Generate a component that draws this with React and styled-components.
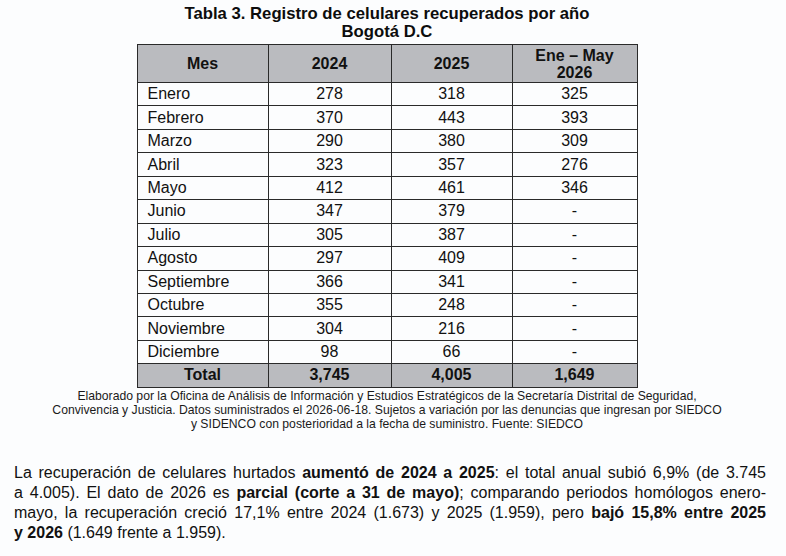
import React from 'react';
import styled, { createGlobalStyle } from 'styled-components';

const GlobalStyle = createGlobalStyle`
  html, body {
    margin: 0;
    padding: 0;
    background: #fcfdfe;
  }
  body {
    font-family: "Liberation Sans", Arial, sans-serif;
    color: #111;
  }
`;

const rows = [
  ['Enero', '278', '318', '325'],
  ['Febrero', '370', '443', '393'],
  ['Marzo', '290', '380', '309'],
  ['Abril', '323', '357', '276'],
  ['Mayo', '412', '461', '346'],
  ['Junio', '347', '379', '-'],
  ['Julio', '305', '387', '-'],
  ['Agosto', '297', '409', '-'],
  ['Septiembre', '366', '341', '-'],
  ['Octubre', '355', '248', '-'],
  ['Noviembre', '304', '216', '-'],
  ['Diciembre', '98', '66', '-'],
];

const App = () => {
  return (
    <Page>
      <GlobalStyle />
      <Figure>
        <Title>
          Tabla 3. Registro de celulares recuperados por año
          <br />
          Bogotá D.C
        </Title>
        <Table>
          <colgroup>
            <col style={{ width: 131 }} />
            <col style={{ width: 123 }} />
            <col style={{ width: 121 }} />
            <col style={{ width: 125 }} />
          </colgroup>
          <thead>
            <tr>
              <HeadCell>Mes</HeadCell>
              <HeadCell>2024</HeadCell>
              <HeadCell>2025</HeadCell>
              <HeadCell>
                Ene – May
                <br />
                2026
              </HeadCell>
            </tr>
          </thead>
          <tbody>
            {rows.map((r) => (
              <Row key={r[0]}>
                <MonthCell>{r[0]}</MonthCell>
                <NumCell>{r[1]}</NumCell>
                <NumCell>{r[2]}</NumCell>
                <NumCell>{r[3]}</NumCell>
              </Row>
            ))}
            <Row>
              <TotalCell>Total</TotalCell>
              <TotalCell>3,745</TotalCell>
              <TotalCell>4,005</TotalCell>
              <TotalCell>1,649</TotalCell>
            </Row>
          </tbody>
        </Table>
        <Caption>
          Elaborado por la Oficina de Análisis de Información y Estudios Estratégicos de la Secretaría Distrital de Seguridad,
          <br />
          Convivencia y Justicia. Datos suministrados el 2026-06-18. Sujetos a variación por las denuncias que ingresan por SIEDCO
          <br />
          y SIDENCO con posterioridad a la fecha de suministro. Fuente: SIEDCO
        </Caption>
      </Figure>
      <Paragraph>
        <Line>
          La recuperación de celulares hurtados <b>aumentó de 2024 a 2025</b>: el total anual subió 6,9% (de 3.745
        </Line>
        <Line>
          a 4.005). El dato de 2026 es <b>parcial (corte a 31 de mayo)</b>; comparando periodos homólogos enero-
        </Line>
        <Line>
          mayo, la recuperación creció 17,1% entre 2024 (1.673) y 2025 (1.959), pero <b>bajó 15,8% entre 2025</b>
        </Line>
        <Line $last>
          <b>y 2026</b> (1.649 frente a 1.959).
        </Line>
      </Paragraph>
    </Page>
  );
};

const Page = styled.div`
  width: 786px;
  height: 556px;
  overflow: hidden;
  box-sizing: border-box;
  padding-top: 5px;
`;

const Figure = styled.div`
  display: flex;
  flex-direction: column;
  align-items: center;
  padding: 0 20px 0 8px;
`;

const Title = styled.div`
  font-size: 16.7px;
  font-weight: bold;
  line-height: 18px;
  text-align: center;
  color: #0d0d0d;
  margin-bottom: 3px;
`;

const Table = styled.table`
  width: 500px;
  border-collapse: collapse;
  table-layout: fixed;
  font-size: 16px;
  color: #111;
  border: 1.5px solid #222;
`;

const HeadCell = styled.th`
  height: 37px;
  padding: 0;
  background: #babbbf;
  border: 1px solid #2a2a2a;
  font-weight: bold;
  line-height: 17px;
  text-align: center;
  vertical-align: middle;
`;

const Row = styled.tr`
  height: 23.45px;
`;

const MonthCell = styled.td`
  padding: 0 0 0 10px;
  border: 1px solid #2a2a2a;
  text-align: left;
  line-height: 20px;
`;

const NumCell = styled.td`
  padding: 0;
  border: 1px solid #2a2a2a;
  text-align: center;
  line-height: 20px;
`;

const TotalCell = styled.td`
  padding: 0;
  border: 1px solid #2a2a2a;
  background: #babbbf;
  font-weight: bold;
  text-align: center;
  line-height: 20px;
`;

const Caption = styled.div`
  margin-top: 1px;
  font-size: 12.2px;
  line-height: 14px;
  text-align: center;
  color: #1a1a1a;
  white-space: nowrap;
`;

const Paragraph = styled.div`
  margin: 32px 20px 0 14px;
  font-size: 16px;
  line-height: 20px;
  color: #111;
`;

const Line = styled.div`
  text-align: ${(p) => (p.$last ? 'left' : 'justify')};
  text-align-last: ${(p) => (p.$last ? 'left' : 'justify')};
  white-space: nowrap;
`;

export default App;
